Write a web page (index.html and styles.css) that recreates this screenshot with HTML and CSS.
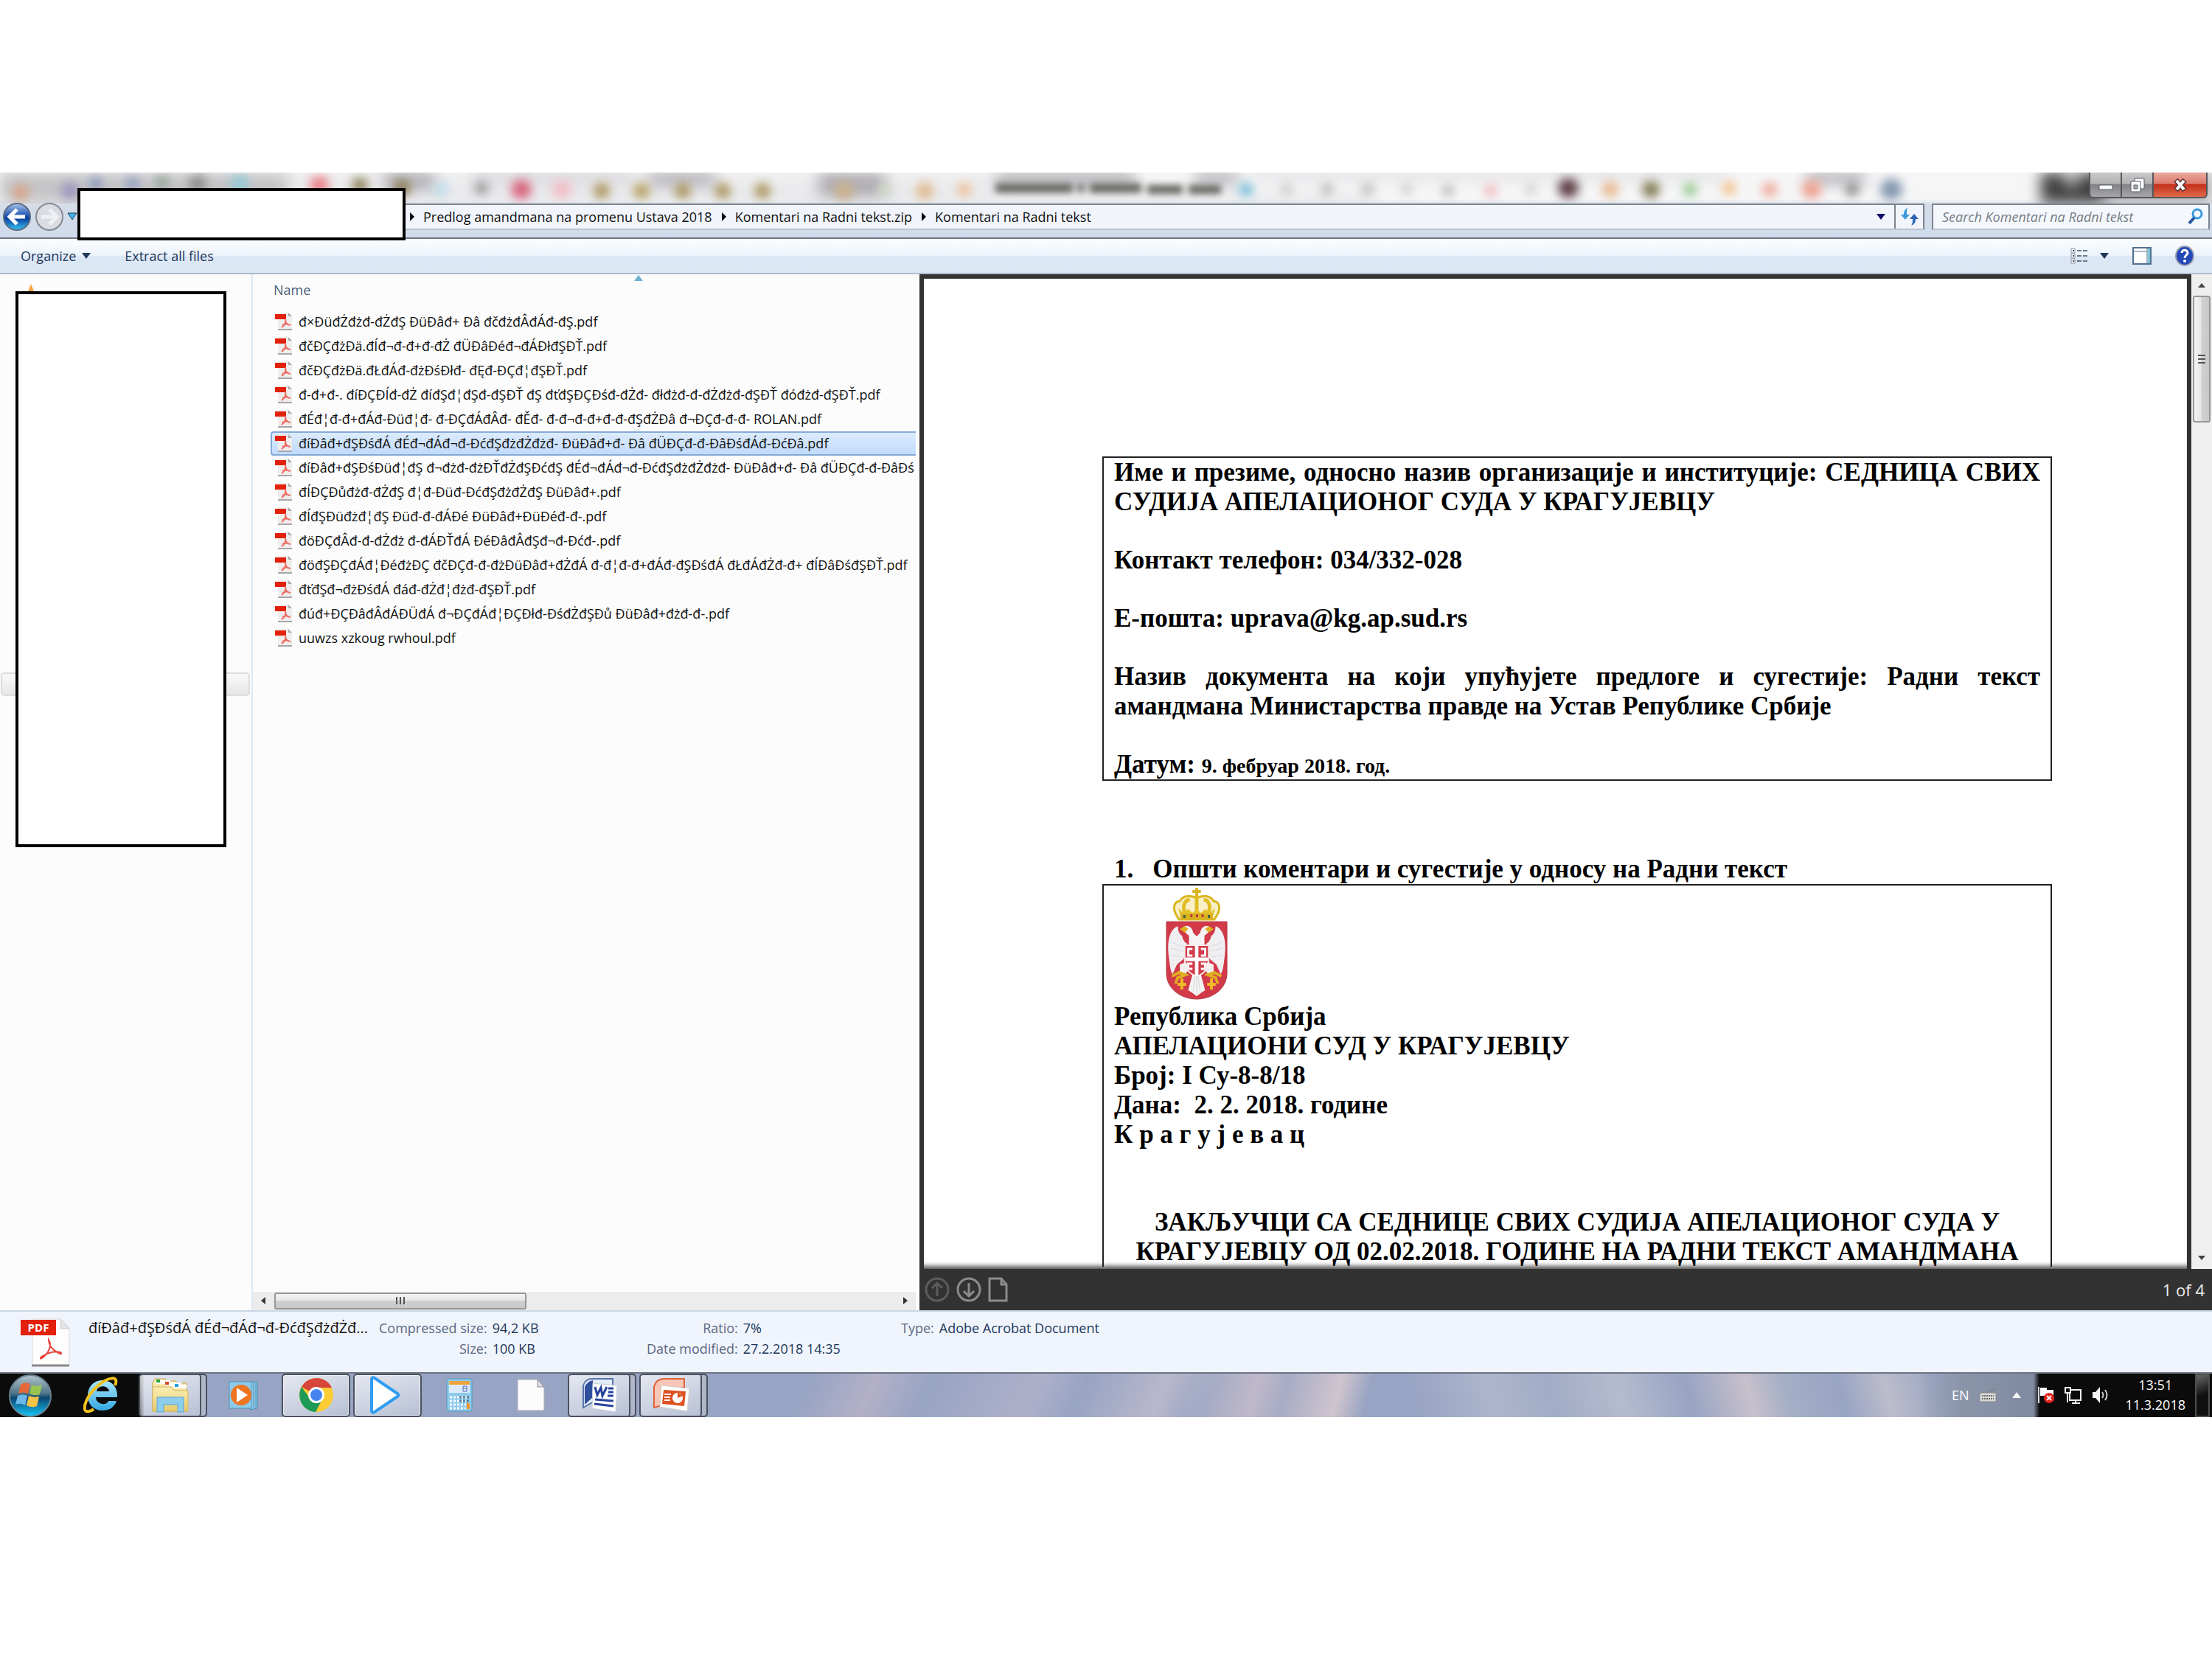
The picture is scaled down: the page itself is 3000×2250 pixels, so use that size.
FILE: index.html
```html
<!DOCTYPE html>
<html lang="sr">
<head>
    <meta charset="UTF-8">
    <meta name="viewport" content="width=device-width, initial-scale=1.0">
    <title>Komentari na Radni tekst</title>
    <link rel="stylesheet" href="styles.css">
</head>
<body>
    <svg class="defs" width="0" height="0" aria-hidden="true">
        <symbol id="pdf" viewBox="0 0 26 26">
            <path d="M5 1h14l5 5v18H5z" fill="#f0eded"/>
            <path d="M19 1v5h5z" fill="#a9a9a9"/>
            <path d="M5 24h19" stroke="#a8a8a8" stroke-width="2"/>
            <path d="M1 3h15v7H1z" fill="#e2200b"/>
            <path d="M15 9c1 5 0 8-5 12M15 10c0 5 3 8 7 8M11 18c4-2 7-2 10 0" fill="none" stroke="#ee6a62" stroke-width="2"/>
        </symbol>
        <linearGradient id="blue" x2="0" y2="1"><stop offset="0" stop-color="#a9c2ea"/><stop offset=".45" stop-color="#2458b4"/><stop offset=".55" stop-color="#0a3c9c"/><stop offset="1" stop-color="#35c4f5"/></linearGradient>
        <linearGradient id="orb" x2="0" y2="1"><stop offset="0" stop-color="#b5c6cf"/><stop offset=".45" stop-color="#4c7387"/><stop offset=".55" stop-color="#0b4570"/><stop offset="1" stop-color="#18c8fa"/></linearGradient>
        <linearGradient id="folder" x2="0" y2="1"><stop offset="0" stop-color="#fbeeb4"/><stop offset="1" stop-color="#e8cb6c"/></linearGradient>
        <linearGradient id="sky" x2="0" y2="1"><stop offset="0" stop-color="#a8e6fb"/><stop offset="1" stop-color="#35a7e0"/></linearGradient>
    </svg>

    <div class="window">
        <header class="glass">
            <svg class="backdrop" viewBox="0 0 3000 44" preserveAspectRatio="none" aria-hidden="true">
                <g class="smear">
                    <path d="M0 0h390v44H0z" fill="#c4c4c6"/>
                    <path d="M390 0h960v40H390z" fill="#ececee"/>
                    <path d="M520 0h70v24h-70zM880 0h90v18h-90zM1110 0h90v34h-90zM1350 0h190v18h-190zM1620 0h60v16h-60zM2450 0h80v16h-80z" fill="#aeabb2"/>
                    <path d="M640 0h220v12H640zM1700 0h640v7h-640z" fill="#cfcdd3"/>
                    <path d="M560 34h1300v8H560z" fill="#dcdee2"/>
                    <path d="M2768 0h85v44h-85z" fill="#3e3e3e"/>
                    <path d="M2853 0h147v44h-147z" fill="#aaa"/>
                    <circle cx="2810" cy="8" r="12" fill="#bbb"/>
                </g>
                <g class="dots">
                    <circle cx="28" cy="28" r="11" fill="#d9a184"/><circle cx="95" cy="26" r="12" fill="#9a94bb"/>
                    <circle cx="130" cy="16" r="9" fill="#7f93bb"/><circle cx="180" cy="16" r="9" fill="#8898c0"/>
                    <circle cx="220" cy="14" r="9" fill="#8ba090"/><circle cx="268" cy="16" r="12" fill="#8c8c8c"/>
                    <circle cx="325" cy="16" r="12" fill="#8fc9d6"/><circle cx="433" cy="18" r="13" fill="#ea7f86"/>
                    <circle cx="488" cy="18" r="11" fill="#8c7d55"/><circle cx="545" cy="22" r="12" fill="#8c7d55"/>
                    <circle cx="598" cy="24" r="10" fill="#bcdcea"/><circle cx="653" cy="22" r="9" fill="#8b8b8b"/>
                    <circle cx="707" cy="24" r="14" fill="#d8647e"/><circle cx="762" cy="24" r="13" fill="#f2bcc4"/>
                    <circle cx="816" cy="26" r="11" fill="#a8935a"/><circle cx="870" cy="26" r="11" fill="#b39c5a"/>
                    <circle cx="926" cy="26" r="11" fill="#a8935a"/><circle cx="980" cy="26" r="11" fill="#a8935a"/>
                    <circle cx="1034" cy="26" r="11" fill="#a8935a"/><circle cx="1145" cy="26" r="13" fill="#cbb08a"/>
                    <circle cx="1200" cy="26" r="9" fill="#cfd8c2"/><circle cx="1254" cy="26" r="12" fill="#dfb98d"/>
                    <circle cx="1308" cy="24" r="9" fill="#efb98b"/><circle cx="1690" cy="24" r="9" fill="#5fb5d3"/>
                    <circle cx="1745" cy="24" r="7" fill="#b8b8b8"/><circle cx="1800" cy="24" r="8" fill="#b0b0b0"/>
                    <circle cx="1855" cy="24" r="8" fill="#b0b0b0"/><circle cx="1908" cy="24" r="7" fill="#bdbdbd"/>
                    <circle cx="1964" cy="26" r="7" fill="#a0a0a0"/><circle cx="2022" cy="26" r="8" fill="#eeaaaf"/>
                    <circle cx="2076" cy="24" r="7" fill="#c3c3c3"/><circle cx="2127" cy="22" r="14" fill="#5c3c44"/>
                    <circle cx="2184" cy="24" r="11" fill="#e6b287"/><circle cx="2239" cy="24" r="12" fill="#7d774f"/>
                    <circle cx="2292" cy="24" r="9" fill="#84c27d"/><circle cx="2345" cy="22" r="9" fill="#f0b877"/>
                    <circle cx="2400" cy="24" r="10" fill="#eea293"/><circle cx="2457" cy="24" r="13" fill="#ef9f8e"/>
                    <circle cx="2512" cy="24" r="9" fill="#7f7f7f"/><circle cx="2565" cy="24" r="15" fill="#8296ae"/>
                </g>
                <path class="caption" d="M1350 22h105M1462 22h8M1478 22h70M1556 24h48M1612 24h44" stroke="#66665f" stroke-width="13"/>
            </svg>
            <div class="controls">
                <button class="control" aria-label="Minimize"><svg width="20" height="16" viewBox="0 0 20 16"><path d="M1 8h18v6H1z" fill="#fff" stroke="#555a66"/></svg></button>
                <button class="control" aria-label="Restore"><svg width="20" height="20" viewBox="0 0 20 20"><path d="M6 1h13v14H6z" fill="#fff" stroke="#555a66"/><path d="M1 5h13v14H1z" fill="#fff" stroke="#555a66"/><path d="M5 10h5v5H5z" fill="#aaa" stroke="#555a66"/></svg></button>
                <button class="control close" aria-label="Close"><svg width="20" height="18" viewBox="0 0 20 18"><path d="M4 2l12 14M16 2L4 16" stroke="#5c3434" stroke-width="7"/><path d="M5 3l10 12M15 3L5 15" stroke="#fff" stroke-width="4"/></svg></button>
            </div>
            <div class="address-row">
                <button class="round" aria-label="Back"><svg width="40" height="40" viewBox="0 0 40 40"><circle cx="20" cy="20" r="18" fill="url(#blue)" stroke="#5c6b83" stroke-width="2"/><path d="M20 10L10 20l10 10M11 20h20" fill="none" stroke="#fff" stroke-width="5"/></svg></button>
                <button class="round" aria-label="Forward"><svg width="40" height="40" viewBox="0 0 40 40"><circle cx="20" cy="20" r="18" fill="#d9dce2" stroke="#858990" stroke-width="2"/><path d="M20 10l10 10-10 10M29 20H9" fill="none" stroke="#eef0f4" stroke-width="5"/></svg></button>
                <button class="recent" aria-label="Recent pages"><svg width="14" height="12" viewBox="0 0 14 12"><path d="M1 1h12L7 10z" fill="#42b5e4" stroke="#173f6b"/></svg></button>
                <nav class="crumbs">
                    <svg class="caret" width="7" height="12" viewBox="0 0 7 12"><path d="M1 0l6 6-6 6z"/></svg>
                    <a href="#">Predlog amandmana na promenu Ustava 2018</a>
                    <svg class="caret" width="7" height="12" viewBox="0 0 7 12"><path d="M1 0l6 6-6 6z"/></svg>
                    <a href="#">Komentari na Radni tekst.zip</a>
                    <svg class="caret" width="7" height="12" viewBox="0 0 7 12"><path d="M1 0l6 6-6 6z"/></svg>
                    <a href="#">Komentari na Radni tekst</a>
                    <button class="history" aria-label="Previous locations"><svg width="12" height="8" viewBox="0 0 12 8"><path d="M0 0h12L6 8z" fill="#10106c"/></svg></button>
                    <button class="refresh" aria-label="Refresh"><svg width="24" height="24" viewBox="0 0 24 24"><path d="M9 0C5 2 4 5 4 9H0l6 7 6-7H8c0-4 0-6 1-9z" fill="#3f9bdc"/><path d="M14 24c5-2 6-5 6-9h4l-6-7-6 7h4c0 4 0 6-2 9z" fill="#2d66b4"/></svg></button>
                </nav>
                <label class="search">
                    <input type="text" placeholder="Search Komentari na Radni tekst" aria-label="Search">
                    <svg width="22" height="24" viewBox="0 0 22 24"><circle cx="13" cy="8" r="6" fill="none" stroke="#3b9be0" stroke-width="3"/><path d="M9 13l-7 8" stroke="#2a56a8" stroke-width="4"/></svg>
                </label>
            </div>
            <div class="cover path-cover"></div>
        </header>

        <div class="toolbar">
            <button class="tool">Organize <svg width="12" height="8" viewBox="0 0 12 8"><path d="M0 0h12L6 8z" fill="#1e395b"/></svg></button>
            <button class="tool">Extract all files</button>
            <div class="tools-right">
                <button class="tool" aria-label="Change your view">
                    <svg width="24" height="24" viewBox="0 0 24 24"><path d="M1 2h5v6H1zM1 9h5v6H1zM1 16h5v6H1z" fill="#fff" stroke="#8790a0"/><path d="M3 5h2M3 12h2M3 19h2" stroke="#44546c" stroke-width="2"/><path d="M9 5h15M9 12h15M9 19h15" stroke="#69778c" stroke-width="2" stroke-dasharray="6 2"/></svg>
                    <svg width="12" height="8" viewBox="0 0 12 8"><path d="M0 0h12L6 8z" fill="#1e395b"/></svg>
                </button>
                <button class="tool" aria-label="Hide the preview pane"><svg width="26" height="24" viewBox="0 0 26 24"><path d="M1 1h24v22H1z" fill="#fff" stroke="#51708f" stroke-width="2"/><path d="M21 2h3v20h-3z" fill="#7cc4d9"/><path d="M2 6h18M20 2v20" stroke="#51708f"/></svg></button>
                <button class="tool" aria-label="Help"><svg width="26" height="28" viewBox="0 0 26 28"><ellipse cx="13" cy="14" rx="12" ry="13" fill="#2348b8" stroke="#9a9fae" stroke-width="2"/><path d="M9 10c0-5 8-5 8 0 0 3-4 3-4 7" fill="none" stroke="#fff" stroke-width="3"/><circle cx="13" cy="21" r="2" fill="#fff"/></svg></button>
            </div>
        </div>

        <main class="panes">
            <aside class="tree">
                <svg class="star" width="8" height="10" viewBox="0 0 8 10"><path d="M4 0l4 10H0z" fill="#f6a443"/></svg>
                <div class="tree-item"></div>
                <div class="cover tree-cover"></div>
            </aside>

            <section class="files">
                <svg class="sort" width="12" height="8" viewBox="0 0 12 8"><path d="M6 0l6 8H0z" fill="#6fb2cf"/></svg>
                <div class="file-scroll">
                    <table class="file-table">
                        <thead><tr><th>Name</th></tr></thead>
                        <tbody>
                            <tr><td><svg><use href="#pdf"/></svg>đ×ĐüđŻđżđ-đŻđŞ ĐüĐâđ+ Đâ đčđżđÂđÁđ-đŞ.pdf</td></tr>
                            <tr><td><svg><use href="#pdf"/></svg>đčĐÇđżĐä.đÍđ¬đ-đ+đ-đŻ đÜĐâĐéđ¬đÁĐłđŞĐŤ.pdf</td></tr>
                            <tr><td><svg><use href="#pdf"/></svg>đčĐÇđżĐä.đŁđÁđ-đżĐśĐłđ- đĘđ-ĐÇđ¦đŞĐŤ.pdf</td></tr>
                            <tr><td><svg><use href="#pdf"/></svg>đ-đ+đ-. đíĐÇĐÍđ-đŻ đíđŞđ¦đŞđ-đŞĐŤ đŞ đťđŞĐÇĐśđ-đŻđ- đłđżđ-đ-đŻđżđ-đŞĐŤ đóđżđ-đŞĐŤ.pdf</td></tr>
                            <tr><td><svg><use href="#pdf"/></svg>đÉđ¦đ-đ+đÁđ-Đüđ¦đ- đ-ĐÇđÁđÂđ- đĚđ- đ-đ¬đ-đ+đ-đ-đŞđŻĐâ đ¬ĐÇđ-đ-đ- ROLAN.pdf</td></tr>
                            <tr class="selected"><td><svg><use href="#pdf"/></svg>đíĐâđ+đŞĐśđÁ đÉđ¬đÁđ¬đ-ĐćđŞđżđŻđżđ- ĐüĐâđ+đ- Đâ đÜĐÇđ-đ-ĐâĐśđÁđ-ĐćĐâ.pdf</td></tr>
                            <tr><td><svg><use href="#pdf"/></svg>đíĐâđ+đŞĐśĐüđ¦đŞ đ¬đżđ-đżĐŤđŻđŞĐćđŞ đÉđ¬đÁđ¬đ-ĐćđŞđżđŻđżđ- ĐüĐâđ+đ- Đâ đÜĐÇđ-đ-ĐâĐś</td></tr>
                            <tr><td><svg><use href="#pdf"/></svg>đÍĐÇĐůđżđ-đŻđŞ đ¦đ-Đüđ-ĐćđŞđżđŻđŞ ĐüĐâđ+.pdf</td></tr>
                            <tr><td><svg><use href="#pdf"/></svg>đÍđŞĐüđżđ¦đŞ Đüđ-đ-đÁĐé ĐüĐâđ+ĐüĐéđ-đ-.pdf</td></tr>
                            <tr><td><svg><use href="#pdf"/></svg>đöĐÇđÂđ-đ-đŻđż đ-đÁĐŤđÁ ĐéĐâđÂđŞđ¬đ-Đćđ-.pdf</td></tr>
                            <tr><td><svg><use href="#pdf"/></svg>đöđŞĐÇđÁđ¦ĐéđżĐÇ đčĐÇđ-đ-đżĐüĐâđ+đŻđÁ đ-đ¦đ-đ+đÁđ-đŞĐśđÁ đŁđÁđŻđ-đ+ đÍĐâĐśđŞĐŤ.pdf</td></tr>
                            <tr><td><svg><use href="#pdf"/></svg>đťđŞđ¬đżĐśđÁ đáđ-đŻđ¦đżđ-đŞĐŤ.pdf</td></tr>
                            <tr><td><svg><use href="#pdf"/></svg>đúđ+ĐÇĐâđÂđÁĐÜđÁ đ¬ĐÇđÁđ¦ĐÇĐłđ-ĐśđŻđŞĐů ĐüĐâđ+đżđ-đ-.pdf</td></tr>
                            <tr><td><svg><use href="#pdf"/></svg>uuwzs xzkoug rwhoul.pdf</td></tr>
                        </tbody>
                    </table>
                </div>
                <div class="hscroll">
                    <svg width="8" height="12" viewBox="0 0 8 12"><path d="M7 1v10L1 6z" fill="#333"/></svg>
                    <div class="thumb"><svg width="14" height="12" viewBox="0 0 14 12"><path d="M2 1v10M7 1v10M12 1v10" stroke="#555" stroke-width="2"/></svg></div>
                    <svg class="far" width="8" height="12" viewBox="0 0 8 12"><path d="M1 1v10l6-5z" fill="#333"/></svg>
                </div>
            </section>

            <section class="preview">
                <div class="viewport">
                    <article class="page">
                        <div class="box">
                            <p>Име и презиме, односно назив организације и институције: СЕДНИЦА СВИХ СУДИЈА АПЕЛАЦИОНОГ СУДА У КРАГУЈЕВЦУ</p>
                            <p class="spaced">Контакт телефон: 034/332-028</p>
                            <p class="spaced">Е-пошта: uprava@kg.ap.sud.rs</p>
                            <p class="spaced">Назив документа на који упућујете предлоге и сугестије: Радни текст амандмана Министарства правде на Устав Републике Србије</p>
                            <p class="spaced">Датум: <span class="date">9. фебруар 2018. год.</span></p>
                        </div>
                        <h2 class="heading"><span>1.</span>Општи коментари и сугестије у односу на Радни текст</h2>
                        <div class="box open">
                            <svg class="arms" width="84" height="154" viewBox="0 0 88 154" preserveAspectRatio="none" role="img" aria-label="Grb Srbije">
                                <path d="M19 44C8 30 11 20 20 19c5-8 15-8 24-4 9-4 19-4 24 4 9 1 12 11 1 25z" fill="#f8efc5" stroke="#d9b51f" stroke-width="3"/>
                                <path d="M30 40C22 28 26 18 34 17M58 40c8-12 4-22-4-23M44 40V10" fill="none" stroke="#e0bd22" stroke-width="5"/>
                                <path d="M44 1v12M38 6h12" stroke="#d9b51f" stroke-width="4"/>
                                <path d="M18 29l6 5 8-4 6 5 6-5 6 5 6-5 8 4 6-5-4 15H22z" fill="#e6c32c"/>
                                <path d="M21 36h46v8H21z" fill="#d9b020"/>
                                <path d="M25 40h3M60 40h3" stroke="#356047" stroke-width="4"/><path d="M35 39h3M43 39h3M51 39h3" stroke="#bc3434" stroke-width="4"/>
                                <path d="M1 47h86v70c0 21-21 35-43 35S1 138 1 117z" fill="#d23a49" stroke="#b23844"/>
                                <path d="M17 53C5 58 2 74 4 92c2 16 3 23 6 26l6-13 9-7 5-10v-14l-7-8c-6-4-5-9-6-13zM71 53c12 5 15 21 13 39-2 16-3 23-6 26l-6-13-9-7-5-10v-14l7-8c6-4 5-9 6-13z" fill="#efeff1"/>
                                <path d="M6 74l19 7M6 83l20 4M7 92l16 3M82 74l-19 7M82 83l-20 4M81 92l-16 3" stroke="#d5d9df"/>
                                <path d="M24 55c6-5 14-1 15 7l5 5 5-5c1-8 9-12 15-7l-5 8-4 3v16H33V66l-4-3z" fill="#f4f2f2"/>
                                <path d="M20 57l7-4 5 4-5 5zM68 57l-7-4-5 4 5 5z" fill="#dfae20"/>
                                <path d="M23 64c1 8 4 12 9 13V67zM65 64c-1 8-4 12-9 13V67z" fill="#d23a49"/>
                                <path d="M27 79h34v24c0 9-9 15-17 19-8-4-17-10-17-19z" fill="#d23a49" stroke="#f6eaea" stroke-width="2"/>
                                <path d="M44 79v41M28 98h32" stroke="#fff" stroke-width="5"/>
                                <path d="M38 84h-6v9h6M50 84h6v9h-6M38 104h-6v7h6M50 104h6v7h-6" fill="none" stroke="#fff" stroke-width="3"/>
                                <path d="M20 105l9-3 5 8-6 8-8-3zM68 105l-9-3-5 8 6 8 8-3z" fill="#f7eeee"/>
                                <path d="M9 121l10-5 9 3-11 4-3 8M79 121l-10-5-9 3 11 4 3 8" fill="none" stroke="#dfae20" stroke-width="4"/>
                                <path d="M23 124v15M17 132h12M65 124v15M59 132h12" stroke="#efbd28" stroke-width="4"/>
                                <path d="M38 119h12l6 21-5 3-7 5-7-5-5-3z" fill="#f6f3f3"/>
                                <path d="M42 121l-3 20M46 121l3 20M44 121v24" stroke="#d4d4d8"/>
                            </svg>
                            <p>Република Србија</p>
                            <p>АПЕЛАЦИОНИ СУД У КРАГУЈЕВЦУ</p>
                            <p>Број: I Су-8-8/18</p>
                            <p>Дана:&nbsp; 2. 2. 2018. године</p>
                            <p>К р а г у ј е в а ц</p>
                            <p class="conclusion">ЗАКЉУЧЦИ СА СЕДНИЦЕ СВИХ СУДИЈА АПЕЛАЦИОНОГ СУДА У КРАГУЈЕВЦУ ОД 02.02.2018. ГОДИНЕ НА РАДНИ ТЕКСТ АМАНДМАНА</p>
                        </div>
                    </article>
                    <div class="vscroll">
                        <svg width="10" height="6" viewBox="0 0 10 6"><path d="M5 0l5 6H0z" fill="#444"/></svg>
                        <div class="thumb"><svg width="12" height="14" viewBox="0 0 12 14"><path d="M1 2h10M1 7h10M1 12h10" stroke="#555" stroke-width="2"/></svg></div>
                        <svg class="far" width="10" height="6" viewBox="0 0 10 6"><path d="M0 0h10L5 6z" fill="#444"/></svg>
                    </div>
                </div>
                <div class="page-bar">
                    <button class="page-button dim" aria-label="Previous page"><svg width="34" height="34" viewBox="0 0 34 34"><circle cx="17" cy="17" r="15"/><path d="M17 26V9M10 15l7-7 7 7"/></svg></button>
                    <button class="page-button" aria-label="Next page"><svg width="34" height="34" viewBox="0 0 34 34"><circle cx="17" cy="17" r="15"/><path d="M17 8v17M10 19l7 7 7-7"/></svg></button>
                    <button class="page-button" aria-label="Page view"><svg width="28" height="34" viewBox="0 0 28 34"><path d="M2 2h16l7 8v22H2zM18 2v8h7"/></svg></button>
                    <span class="page-count">1 of 4</span>
                </div>
            </section>
        </main>

        <footer class="details">
            <svg class="big-pdf" width="68" height="68" viewBox="0 0 68 68"><path d="M16 2h38l12 13v49H16z" fill="#fdfdfd" stroke="#d8d8da"/><path d="M54 2v13h12z" fill="#e5e5e7" stroke="#cbcbcb"/><path d="M15 65h51" stroke="#8b8b8b" stroke-width="3"/><path d="M0 3h48v21H0z" fill="#e2200b"/><text x="24" y="19" class="pdf-label">PDF</text><path d="M38 30c5 8 0 18-9 25-3 2-3-1 1-3 7-4 16-7 24-5 3 2 0 3-3 1-7-4-13-10-13-18z" fill="none" stroke="#e5443c" stroke-width="2"/></svg>
            <strong class="details-name">đíĐâđ+đŞĐśđÁ đÉđ¬đÁđ¬đ-ĐćđŞđżđŻđ...</strong>
            <dl class="facts size-facts"><dt>Compressed size:</dt><dd>94,2 KB</dd><dt>Size:</dt><dd>100 KB</dd></dl>
            <dl class="facts date-facts"><dt>Ratio:</dt><dd>7%</dd><dt>Date modified:</dt><dd>27.2.2018 14:35</dd></dl>
            <dl class="facts"><dt>Type:</dt><dd>Adobe Acrobat Document</dd></dl>
        </footer>

        <div class="taskbar">
            <button class="start" aria-label="Start"><svg width="60" height="60" viewBox="0 0 60 60"><circle cx="30" cy="30" r="28" fill="url(#orb)" stroke="#6a8290" stroke-width="2"/><path d="M17 15q6-5 13-1l-3 13q-7-3-13 0z" fill="#e4683a"/><path d="M32 15q7 3 14 0l-3 13q-7 3-14-1z" fill="#98c454"/><path d="M13 30q7-3 13 0l-3 13q-7-4-13-1z" fill="#6cb8ea"/><path d="M28 30q7 3 14 1l-3 13q-7 3-14-1z" fill="#f6c445"/></svg></button>
            <button class="app" aria-label="Internet Explorer"><svg width="50" height="50" viewBox="0 0 50 50"><path d="M45 33c-3 9-10 13-19 13C14 46 6 38 6 26S14 5 26 5s21 9 20 23H17c0 10 15 12 17 5zM18 20h17c-1-9-16-9-17 0z" fill="url(#sky)"/><path d="M43 12c6-14-9-12-24 1C4 26-2 45 4 47c3 1 8-1 10-3" fill="none" stroke="#f2c21c" stroke-width="4"/></svg></button>
            <button class="app open-app grouped" aria-label="Windows Explorer"><svg width="54" height="50" viewBox="0 0 54 50"><path d="M3 9l3-6h14l2 3h12l3 3h12v38H3z" fill="url(#folder)" stroke="#c7a34e"/><path d="M7 5h20v5H7zM20 8h22v5H20zM31 11h18v5H31z" fill="#fff"/><path d="M8 4h5v4H8z" fill="#27a836"/><path d="M20 7h5v4h-5z" fill="#d94b26"/><path d="M33 10h5v4h-5z" fill="#27a0dc"/><path d="M3 14h24l5 5h19v28H3z" fill="url(#folder)" stroke="#d3b564"/><path d="M9 28h36v20h-8V38H18v10H9z" fill="#8dcdee" stroke="#5ba7d0"/></svg></button>
            <button class="app" aria-label="Windows Media Player"><svg width="46" height="44" viewBox="0 0 46 44"><path d="M30 4h10v36l-10 2z" fill="#8fc8e4" stroke="#4d93bc"/><path d="M2 4h30v36H2z" fill="#8dcbe8" stroke="#4d93bc"/><path d="M35 4v36M38 4v36" stroke="#4d93bc"/><circle cx="18" cy="22" r="14" fill="#ee7420"/><path d="M12 12l15 10-15 10z" fill="#fff"/></svg></button>
            <button class="app open-app" aria-label="Chrome"><svg width="48" height="48" viewBox="0 0 48 48"><circle cx="24" cy="24" r="23" fill="#fbcc34"/><path d="M24 24L4 13A23 23 0 0 1 45 14H24z" fill="#d8453a"/><path d="M4 13A23 23 0 0 0 23 47l10-19-9-4-9 4z" fill="#1d9a56"/><circle cx="24" cy="24" r="11" fill="#fff"/><circle cx="24" cy="24" r="8" fill="#4684f0"/></svg></button>
            <button class="app open-app play" aria-label="Video player"><svg width="42" height="52" viewBox="0 0 42 52"><path d="M3 5q0-4 4-2l31 21q3 2 0 4L7 49q-4 2-4-2z" fill="#fff" stroke="#2f9df2" stroke-width="4"/></svg></button>
            <button class="app" aria-label="Calculator"><svg width="36" height="46" viewBox="0 0 36 46"><rect x="1" y="1" width="34" height="44" rx="3" fill="#8ecaea" stroke="#5198c2"/><path d="M4 4h28v5H4z" fill="#eda43e"/><path d="M4 9h28v11H4z" fill="#dcebfb"/><path d="M23 11h5v7h-5zM23 14h5" fill="none" stroke="#4f68ae"/><path d="M5 26h25M5 31h22M5 36h22M5 41h22" stroke="#f6fbff" stroke-width="3" stroke-dasharray="3 2"/><path d="M18 26h14M18 31h14" stroke="#5f7c9b" stroke-width="3" stroke-dasharray="3 2"/><path d="M28 34h4v8h-4z" fill="#f0992d"/></svg></button>
            <button class="app" aria-label="Document"><svg width="38" height="44" viewBox="0 0 38 44"><path d="M1 1h27l9 10v32H1z" fill="#fcfcfc" stroke="#adadb4"/><path d="M28 1v10h9z" fill="#dcdce0" stroke="#8e8e98"/></svg></button>
            <button class="app open-app grouped" aria-label="Word"><svg width="50" height="50" viewBox="0 0 50 50"><path d="M3 42V12Q6 3 15 3h28v16H22v12z" fill="#e4ecf8" stroke="#5873ad" stroke-width="2"/><path d="M5 38V14q3-7 11-9v23z" fill="#2f4e9c"/><path d="M16 9l33 3-2 36-32-5z" fill="#fff" stroke="#c9cfdc"/><path d="M19 14l3 11 5-10 2 11 6-12" fill="none" stroke="#26439b" stroke-width="3"/><path d="M37 16h7M37 21h7M36 26h8M19 31l25 2M18 37l26 3" stroke="#26439b" stroke-width="3"/></svg></button>
            <button class="app open-app grouped" aria-label="PowerPoint"><svg width="52" height="50" viewBox="0 0 52 50"><path d="M3 42V14Q6 3 16 3h28v12H14v24z" fill="#f7c6b5" stroke="#df6138" stroke-width="2"/><path d="M13 12l38 4-3 31-37-6z" fill="#fff" stroke="#d8cfcc"/><path d="M16 18l30 2-2 20-30-3z" fill="#dd5220"/><path d="M17 24h9M17 28h8M17 32h8" stroke="#fff" stroke-width="2"/><circle cx="35" cy="29" r="7" fill="#fff"/><path d="M35 29v-8l7 5z" fill="#dd5220"/></svg></button>
            <div class="tray">
                <span class="language">EN</span>
                <svg width="26" height="22" viewBox="0 0 26 22"><path d="M2 8h22v12H2z" fill="#d9d9d6" stroke="#88898b"/><path d="M5 12h16M5 16h16" stroke="#6b6b6b" stroke-width="2" stroke-dasharray="2 1"/><path d="M12 8c1-5 5 0 10-6" fill="none" stroke="#777"/></svg>
                <button class="more" aria-label="Show hidden icons"><svg width="12" height="10" viewBox="0 0 12 10"><path d="M6 1l6 8H0z" fill="#f4f4f4"/></svg></button>
                <svg width="24" height="26" viewBox="0 0 24 26"><path d="M2 2v22" stroke="#ddd" stroke-width="2"/><path d="M4 3h9v3h9v8H4z" fill="#fff"/><circle cx="16" cy="17" r="7" fill="#e2231a"/><path d="M13 14l6 6M19 14l-6 6" stroke="#fff" stroke-width="2"/></svg>
                <svg width="24" height="26" viewBox="0 0 24 26"><path d="M7 6h15v14H7zM10 24h11M15 20v4M4 9v14" fill="none" stroke="#eee" stroke-width="2"/><path d="M1 3h7v7H1z" fill="#111" stroke="#eee" stroke-width="2"/></svg>
                <svg width="24" height="26" viewBox="0 0 24 26"><path d="M1 9h4l6-7v22l-6-7H1z" fill="#f4f4f4"/><path d="M14 9q3 4 0 8M18 6q5 7 0 14" fill="none" stroke="#ccc" stroke-width="2"/></svg>
                <div class="clock"><time>13:51</time><time>11.3.2018</time></div>
                <button class="show-desktop" aria-label="Show desktop"></button>
            </div>
        </div>
    </div>
</body>
</html>
```
FILE: styles.css
```css
* {
    box-sizing: border-box;
}
body {
    margin: 0;
    padding-top: 234px;
    background: #fff;
    font-family: "Open Sans", "Noto Sans", sans-serif;
    font-size: 18px;
    color: #111;
}
button {
    padding: 0;
    border: none;
    background: none;
    font: inherit;
    color: inherit;
}
a {
    color: inherit;
    text-decoration: none;
}
svg {
    display: block;
    flex: none;
}
.defs {
    position: absolute;
}
.window {
    display: flex;
    flex-direction: column;
    height: 75vh;
    min-height: 1200px;
}

/* title and address */
.glass {
    position: relative;
    height: 90px;
    background: linear-gradient(#f6f6f7 0 36px, #d5dce8 44px, #cfdbec);
    border-bottom: 2px solid #6f7783;
}
.backdrop {
    position: absolute;
    top: 0;
    left: 0;
    width: 100%;
    height: 42px;
}
.smear {
    filter: blur(10px);
}
.dots {
    filter: blur(7px);
}
.caption {
    filter: blur(5px);
}
.controls {
    position: relative;
    display: flex;
    justify-content: flex-end;
    height: 42px;
    padding-right: 6px;
}
.control {
    display: grid;
    place-items: center;
    width: 43px;
    height: 35px;
    border: 2px solid #55575c;
    border-top: none;
    border-right-width: 0;
    background: linear-gradient(#c9c9c9, #b3b3b5 45%, #848487 50%, #a6a6a8);
}
.control:first-child {
    border-bottom-left-radius: 6px;
}
.close {
    width: 75px;
    border-right-width: 2px;
    border-bottom-right-radius: 6px;
    background: linear-gradient(#eba89e, #dd7c6e 45%, #c5301a 50%, #dd6a4a);
}
.address-row {
    position: relative;
    display: flex;
    align-items: center;
    height: 36px;
    padding: 0 3px;
    gap: 4px;
}
.round {
    width: 40px;
    height: 40px;
}
.recent {
    width: 14px;
}
.crumbs {
    display: flex;
    flex: 1;
    align-items: center;
    gap: 12px;
    height: 36px;
    margin-right: 6px;
    padding-left: 444px;
    border: 2px solid #7b838e;
    border-bottom-color: #b9c3ce;
    background: #f1f5fb;
    white-space: nowrap;
}
.history {
    margin-left: auto;
}
.refresh {
    display: grid;
    place-items: center;
    width: 39px;
    height: 32px;
    border-left: 2px solid #7b838e;
}
.search {
    display: flex;
    align-items: center;
    width: 377px;
    height: 36px;
    padding: 0 6px 0 12px;
    border: 2px solid #7b838e;
    border-bottom-color: #b9c3ce;
    background: #f4f8fd;
}
.search input {
    flex: 1;
    min-width: 0;
    padding: 0;
    border: none;
    outline: none;
    background: none;
    font: italic 18px "Open Sans", "Noto Sans", sans-serif;
}
.search input::placeholder {
    color: #777c84;
}
.cover {
    position: absolute;
    border: 4px solid #000;
    background: #fff;
}
.path-cover {
    top: 21px;
    left: 105px;
    width: 445px;
    height: 71px;
}

/* command bar */
.toolbar {
    display: flex;
    align-items: center;
    gap: 46px;
    height: 48px;
    padding: 0 24px 0 28px;
    border-bottom: 2px solid #aebccd;
    background: linear-gradient(#fbfdff, #edf4fc 48%, #dce7f5 52%, #dce7f4);
    color: #1e395b;
}
.tool {
    display: flex;
    align-items: center;
    gap: 8px;
}
.tools-right {
    display: flex;
    gap: 32px;
    margin-left: auto;
}
.tools-right .tool {
    gap: 16px;
}

/* panes */
.panes {
    display: flex;
    flex: 1;
    min-height: 0;
    background: #fcfcfc;
}
.tree {
    position: relative;
    width: 343px;
    border-right: 2px solid #dde7f0;
}
.star {
    margin: 13px 0 0 38px;
}
.tree-item {
    height: 32px;
    margin: 517px 2px 0 1px;
    border: 2px solid #dcdcdc;
    border-radius: 5px;
    background: linear-gradient(#fafafa, #e6e6e6);
}
.tree-cover {
    top: 23px;
    left: 21px;
    width: 286px;
    height: 754px;
}
.files {
    position: relative;
    display: flex;
    flex-direction: column;
    width: 904px;
    padding-right: 5px;
}
.sort {
    position: absolute;
    top: 1px;
    left: 517px;
}
.file-scroll {
    flex: 1;
    min-height: 0;
    padding-left: 24px;
    overflow: hidden;
}
.file-table {
    width: 100%;
    table-layout: fixed;
    border-collapse: separate;
    border-spacing: 0;
    white-space: nowrap;
}
.file-table th {
    height: 48px;
    padding: 0 0 7px 4px;
    font-weight: 400;
    text-align: left;
    color: #4c607a;
}
.file-table td {
    height: 33px;
    padding: 0 0 0 36px;
    border: 2px solid transparent;
    border-right: none;
    overflow: hidden;
    line-height: 29px;
}
.file-table svg {
    float: left;
    width: 28px;
    height: 26px;
    margin: 1px 0 0 -34px;
}
.file-table .selected td {
    border-color: #84aad8;
    border-radius: 4px 0 0 4px;
    background: linear-gradient(#dcebfc, #c1dbfc);
}
.hscroll {
    display: flex;
    align-items: center;
    gap: 11px;
    height: 25px;
    padding: 0 10px;
    background: #ececec;
}
.thumb {
    display: grid;
    place-items: center;
    border: 2px solid #979797;
    border-radius: 3px;
    background: linear-gradient(#f4f4f4, #e6e6e6 45%, #d0d0d0 50%, #c8c8c8);
}
.hscroll .thumb {
    width: 342px;
    height: 23px;
}
.hscroll .far {
    margin-left: auto;
}

/* preview */
.preview {
    display: flex;
    flex: 1;
    flex-direction: column;
    min-width: 0;
    background: #323232;
}
.viewport {
    display: flex;
    flex: 1;
    min-height: 0;
}
.page {
    flex: 1;
    margin: 6px 6px 0;
    padding: 241px 183px 0 242px;
    overflow: hidden;
    background: #fff;
    box-shadow: inset 0 -8px 6px -4px #555;
    font: bold 35px/40px "Liberation Serif", serif;
    color: #000;
}
.page p {
    margin: 0;
}
.box {
    padding: 0 14px;
    border: 2px solid #222;
    text-align: justify;
}
.box .spaced {
    margin-top: 39px;
}
.date {
    font-size: 28px;
    line-height: 28px;
}
.heading {
    display: flex;
    gap: 26px;
    margin: 100px 0 0;
    padding-left: 16px;
    font: inherit;
}
.open {
    border-bottom: none;
}
.arms {
    margin: 2px 0 2px 70px;
}
.box .conclusion {
    margin-top: 79px;
    text-align: center;
}
.vscroll {
    display: flex;
    flex-direction: column;
    align-items: center;
    gap: 11px;
    width: 28px;
    padding: 12px 0;
    background: #efefef;
}
.vscroll .thumb {
    width: 24px;
    height: 172px;
    background: linear-gradient(90deg, #f4f4f4, #e6e6e6 45%, #d0d0d0 50%, #c8c8c8);
}
.vscroll .far {
    margin-top: auto;
}
.page-bar {
    display: flex;
    align-items: center;
    gap: 9px;
    height: 56px;
    padding: 0 10px 0 7px;
    color: #eee;
    font-size: 22px;
}
.page-button svg {
    fill: none;
    stroke: #8c8c8c;
    stroke-width: 3px;
}
.dim svg {
    stroke: #5c5c5c;
}
.page-count {
    margin-left: auto;
}

/* details */
.details {
    display: flex;
    height: 84px;
    padding: 8px 28px 0;
    border-top: 2px solid #ccd6e4;
    background: #f0f4fc;
    line-height: 28px;
}
.big-pdf {
    margin-right: 24px;
}
.pdf-label {
    font: bold 15px "Open Sans", sans-serif;
    fill: #fff;
    text-anchor: middle;
}
.details-name {
    width: 394px;
    font-size: 20px;
    font-weight: 400;
    white-space: nowrap;
}
.facts {
    display: grid;
    grid-template-columns: auto 1fr;
    align-content: start;
    column-gap: 7px;
    margin: 0;
    white-space: nowrap;
    color: #1e395b;
}
.facts dt {
    text-align: right;
    color: #5a6880;
}
.facts dd {
    margin: 0;
}
.size-facts {
    width: 363px;
}
.date-facts {
    width: 345px;
}

/* taskbar */
.taskbar {
    display: flex;
    gap: 4px;
    height: 61px;
    border-top: 2px solid #6b7385;
    background:
        linear-gradient(90deg, #0b0b0b 190px, transparent 196px),
        linear-gradient(270deg, #0b0b0b 234px, #7f8aa0 242px, #8b95aa 340px, transparent 400px),
        linear-gradient(115deg, transparent 1000px, #b3b0c8 1080px, transparent 1150px, #aeb0ca 1280px, transparent 1340px, #b9b7cc 1440px, transparent 1500px),
        linear-gradient(105deg, transparent 1560px, #bfb8ca 1650px, #a8acc6 1690px, #cfc4ce 1760px, transparent 1800px),
        linear-gradient(75deg, transparent 1860px, #adb5cc 1960px, #a2acc6 2040px, #b5bbcf 2130px, transparent 2220px, #c8c0cb 2300px, #a3aec6 2350px, transparent 2420px, #bcbccb 2480px, transparent 2560px),
        #98a4c3;
}
.start {
    display: grid;
    place-items: center;
    width: 87px;
    padding-right: 5px;
}
.app {
    display: grid;
    place-items: center;
    width: 93px;
}
.open-app {
    border: 2px solid #4b515f;
    border-radius: 5px;
    background: linear-gradient(160deg, rgba(255, 255, 255, .75), rgba(255, 255, 255, .3));
    box-shadow: inset 0 0 0 1px rgba(255, 255, 255, .6);
}
.grouped {
    padding-right: 8px;
    box-shadow: inset -7px 0 0 -1px #aeb6c8, inset -9px 0 0 -1px #4b515f;
}
.play {
    padding-right: 8px;
}
.tray {
    display: flex;
    align-items: center;
    gap: 13px;
    margin-left: auto;
    padding-right: 3px;
    color: #fff;
}
.more {
    margin: 0 9px 0 7px;
}
.clock {
    display: flex;
    flex-direction: column;
    margin-left: 8px;
    line-height: 27px;
    text-align: center;
}
.show-desktop {
    align-self: stretch;
    width: 20px;
    border: 2px solid #4f4f4f;
    background: linear-gradient(160deg, #666, #111 50%);
}
```
